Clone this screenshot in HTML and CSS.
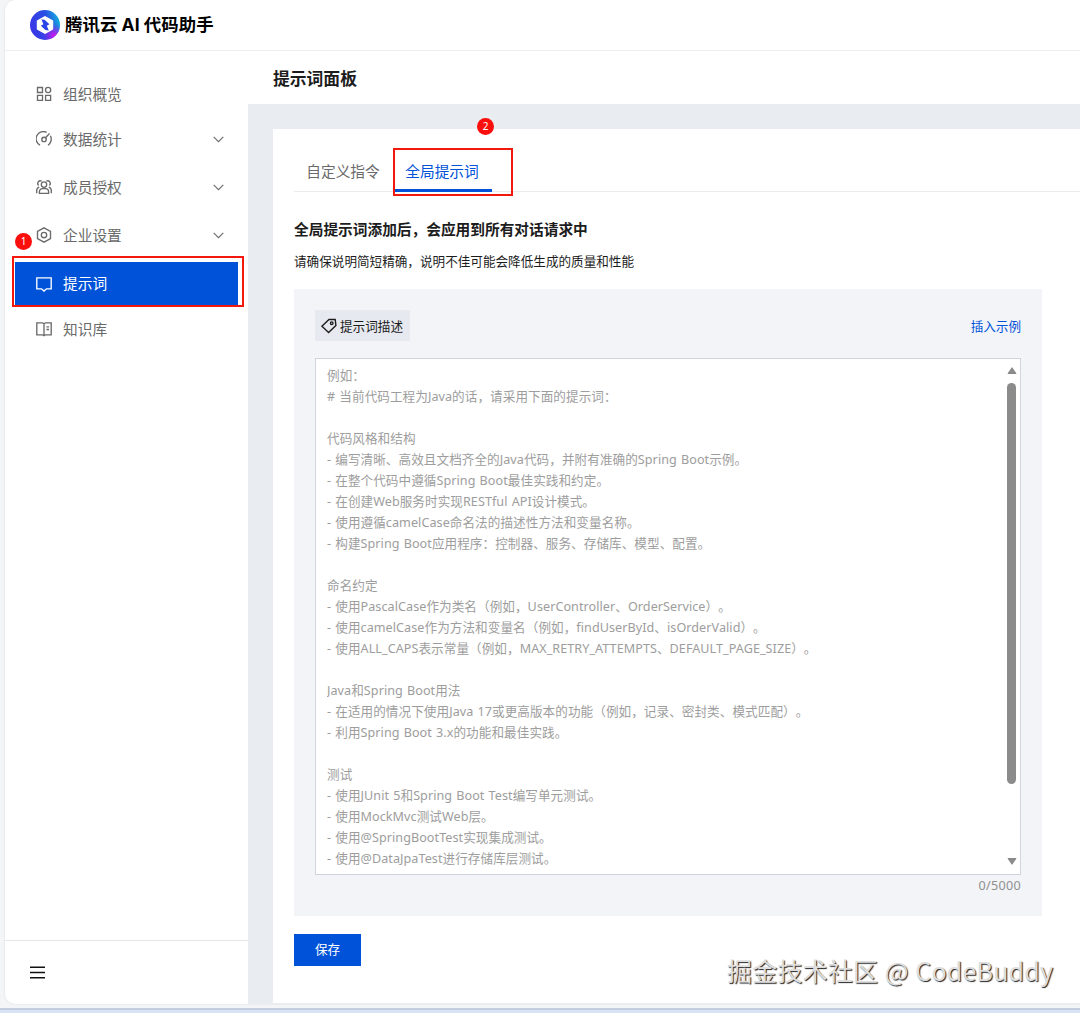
FILE: index.html
```html
<!DOCTYPE html>
<html lang="zh-CN">
<head>
  <meta charset="UTF-8">
  <meta name="viewport" content="width=device-width, initial-scale=1.0">
  <title>腾讯云 AI 代码助手</title>
  <link rel="stylesheet" href="styles.css">
</head>

<body>
<div class="app">
  <header class="header">
    <svg class="logo" viewBox="0 0 30 30">
      <defs>
        <linearGradient id="lg" x1="0" y1="0.6" x2="1" y2="0.3">
          <stop offset="0" stop-color="#3a35e6"/>
          <stop offset="0.6" stop-color="#2a50e4"/>
          <stop offset="1" stop-color="#12b4dc"/>
        </linearGradient>
        <radialGradient id="pk" cx="0.8" cy="0.85" r="0.4">
          <stop offset="0" stop-color="#d414f0"/>
          <stop offset="1" stop-color="#8a20f0" stop-opacity="0"/>
        </radialGradient>
      </defs>
      <circle cx="15" cy="15" r="15" fill="url(#lg)"/>
      <circle cx="15" cy="15" r="15" fill="url(#pk)"/>
      <path d="M15 7l7.200 4v8L15 23l-7.200-4v-8z" fill="#fff" stroke="#fff" stroke-width="2" stroke-linejoin="round"/>
      <path d="M11.400 9.400l3.200.4 4.800 4.400-2.600 1.600 2 4.800-3.400-.6-4.600-4.200 2.600-1.600z" fill="#2a45e6"/>
    </svg>
    <h1>腾讯云 AI 代码助手</h1>
  </header>

  <div class="body">
    <aside class="sidebar">
      <nav>
        <a class="item">
          <svg class="icon" viewBox="0 0 16 16"><path d="M1.500 1.500h5v5h-5zM1.500 9.400h5v5h-5zM9.600 9.400h5v5h-5z"/><circle cx="12.100" cy="4" r="2.600"/></svg>
          <span>组织概览</span>
        </a>
        <a class="item group">
          <svg class="icon" viewBox="0 0 16 16"><path d="M4 14.200A7.200 7.200 0 0 1 10.600 1.400M12 14.200a7.200 7.200 0 0 0 2.400-9.400M9.500 6.700l4-4.200"/><circle cx="8" cy="8.400" r="2.200"/></svg>
          <span>数据统计</span>
          <svg class="arrow" viewBox="0 0 10 6"><path d="M.6.6L5 5 9.400.6"/></svg>
        </a>
        <a class="item group">
          <svg class="icon" viewBox="0 0 16 16"><circle cx="8" cy="5.600" r="2.700"/><path d="M3.400 14.300v-1.500a3.200 3.200 0 0 1 3.200-3.200h2.800a3.200 3.200 0 0 1 3.200 3.200v1.500zM5.600 2.200a2.600 2.600 0 0 0-3 4.200M10.400 2.200a2.600 2.600 0 0 1 3 4.200M3.200 8.200A3.600 3.600 0 0 0 .7 11.600v2.700M12.800 8.200a3.600 3.600 0 0 1 2.500 3.400v2.700"/></svg>
          <span>成员授权</span>
          <svg class="arrow" viewBox="0 0 10 6"><path d="M.6.6L5 5 9.400.6"/></svg>
        </a>
        <a class="item group">
          <svg class="icon" viewBox="0 0 16 16"><path d="M8 .8l6.500 3.600v7.200L8 15.200l-6.500-3.600V4.400z"/><circle cx="8" cy="8" r="2.700"/></svg>
          <span>企业设置</span>
          <svg class="arrow" viewBox="0 0 10 6"><path d="M.6.6L5 5 9.400.6"/></svg>
        </a>
        <a class="item active">
          <svg class="icon" viewBox="0 0 16 16"><path d="M.8 1.800h14.400v11h-4.700L8 15l-2.500-2.200H.8z"/></svg>
          <span>提示词</span>
        </a>
        <a class="item">
          <svg class="icon" viewBox="0 0 16 16"><path d="M8 2.800L6.500 1.800H.8v12h5.700l1.500 1 1.500-1h5.700v-12H9.500zM8 2.800v12M10.400 5.800h2.600M10.400 8.500h2.600"/></svg>
          <span>知识库</span>
        </a>
      </nav>
      <div class="collapse">
        <svg class="burger" viewBox="0 0 14 12"><path d="M0 1h14M0 6h14M0 11h14"/></svg>
      </div>
    </aside>

    <main class="main">
      <h2 class="page-title">提示词面板</h2>
      <div class="page">
        <section class="card">
          <div class="tabs">
            <a class="tab">自定义指令</a>
            <a class="tab current">全局提示词</a>
          </div>
          <h3>全局提示词添加后，会应用到所有对话请求中</h3>
          <p class="tip">请确保说明简短精确，说明不佳可能会降低生成的质量和性能</p>

          <div class="panel">
            <div class="panel-head">
              <span class="tag">
                <svg class="tag-icon" viewBox="0 0 16 16"><path d="M.9 8.200L8 1.500l6.200-.1.700 6-7.300 7.200z"/><circle cx="10.700" cy="5.200" r="1.300"/></svg>
                提示词描述
              </span>
              <a class="link">插入示例</a>
            </div>
            <div class="editor">
              <div class="placeholder">例如：
# 当前代码工程为Java的话，请采用下面的提示词：

代码风格和结构
- 编写清晰、高效且文档齐全的Java代码，并附有准确的Spring Boot示例。
- 在整个代码中遵循Spring Boot最佳实践和约定。
- 在创建Web服务时实现RESTful API设计模式。
- 使用遵循camelCase命名法的描述性方法和变量名称。
- 构建Spring Boot应用程序：控制器、服务、存储库、模型、配置。

命名约定
- 使用PascalCase作为类名（例如，UserController、OrderService）。
- 使用camelCase作为方法和变量名（例如，findUserById、isOrderValid）。
- 使用ALL_CAPS表示常量（例如，MAX_RETRY_ATTEMPTS、DEFAULT_PAGE_SIZE）。

Java和Spring Boot用法
- 在适用的情况下使用Java 17或更高版本的功能（例如，记录、密封类、模式匹配）。
- 利用Spring Boot 3.x的功能和最佳实践。

测试
- 使用JUnit 5和Spring Boot Test编写单元测试。
- 使用MockMvc测试Web层。
- 使用@SpringBootTest实现集成测试。
- 使用@DataJpaTest进行存储库层测试。</div>
              <div class="scrollbar">
                <svg class="sb-arrow" viewBox="0 0 10 8"><path d="M5 1.200L9 7H1z"/></svg>
                <div class="thumb"></div>
                <svg class="sb-arrow" viewBox="0 0 10 8"><path d="M5 6.800L1 1h8z"/></svg>
              </div>
            </div>
            <div class="count">0/5000</div>
          </div>

          <button class="save">保存</button>
        </section>
      </div>
    </main>
  </div>
</div>
<div class="taskbar"></div>

<!-- step marks -->
<div class="mark mark-menu"></div>
<div class="mark mark-tab"></div>
<div class="badge badge-menu">1</div>
<div class="badge badge-tab">2</div>
<div class="watermark">掘金技术社区 @ CodeBuddy</div>
</body>
</html>
```
FILE: styles.css
```css
*{box-sizing:border-box}
html,body{margin:0;padding:0;width:100%;height:100%;}
body{position:relative;overflow:hidden;display:flex;flex-direction:column;
     background:#f4f5f6;color:#1c1c1c;font-size:12.6px;
     font-family:"Noto Sans","Noto Sans CJK SC",sans-serif;
     text-spacing-trim:space-all;}
h1,h2,h3,p{margin:0}
svg{display:block;flex:none;fill:none;stroke:currentColor}

.app{height:1004px;flex:none;margin-left:5px;background:#fff;display:flex;flex-direction:column;
     border-radius:10px 0 0 10px;overflow:hidden;box-shadow:0 0 2px #d5d9de}
.header{height:51px;flex:none;border-bottom:1px solid #eceef0;
        display:flex;align-items:center;padding-left:25px;gap:5px}
.logo{width:30px;height:30px;stroke:none}
.header h1{font:bold 17.4px/26px Inter,"Noto Sans CJK SC",sans-serif;color:#000;letter-spacing:.08px}
.body{flex:1;display:flex;min-height:0}

/* sidebar */
.sidebar{width:243px;flex:none;display:flex;flex-direction:column}
nav{flex:1;padding:22px 10px 0}
.item{display:flex;align-items:center;height:42px;margin-bottom:3px;
      padding:0 14px 0 21px;font-size:14.7px;color:#6a6a6a}
.item.group{margin-bottom:6px}
.item span{margin:-2px 0 0 11px;flex:1}
.item.active{height:43px;margin-bottom:3px;background:#0052d9;color:#fff}
.icon{width:16px;height:16px;stroke-width:1.35}
.arrow{width:11px;height:7px}
.collapse{height:64px;border-top:1px solid #e3e7ea;padding:25px 0 0 25px}
.burger{width:15px;height:13px;color:#111;stroke-width:1.4}

/* content */
.main{flex:1;display:flex;flex-direction:column;min-width:0}
.page-title{height:53px;flex:none;padding-left:25px;font-size:16.8px;line-height:56px}
.page{flex:1;background:#e9edf1;padding:25px 0 1px 25px;display:flex}
.card{flex:1;background:#fff;padding:20px 0 0 21px}
.tabs{display:flex;height:43px;border-bottom:1px solid #e9ebee}
.tab{width:99px;height:43px;padding-right:1px;text-align:center;line-height:45px;font-size:14.7px;color:#6a6a6a}
.tab.current{color:#0052d9;border-bottom:3px solid #0052d9}
.card h3{margin-top:25px;font-size:14.7px;line-height:24px}
.tip{margin-top:11px;line-height:20px}

.panel{width:748px;height:627px;margin-top:17px;padding:21px;background:#f2f4f8}
.panel-head{display:flex;justify-content:space-between;align-items:center;height:31px}
.tag{display:flex;align-items:center;gap:3px;width:95px;height:31px;padding-left:6px;background:#e6e9ef}
.tag-icon{width:16px;height:16px;stroke-width:1.4}
.link{color:#0052d9}
.editor{display:flex;height:517px;margin-top:17px;padding:6px 3px 5px 11px;
        background:#fff;border:1px solid #cfd5de}
.placeholder{flex:1;white-space:pre;line-height:21px;color:#9d9d9d;overflow:hidden;
             word-spacing:.8px;letter-spacing:.06px}
.scrollbar{width:11px;display:flex;flex-direction:column;align-items:center;padding-top:1px}
.sb-arrow{width:10px;height:9px;fill:#8b8b8b;stroke:#8b8b8b;stroke-width:1;stroke-linejoin:round}
.thumb{width:9px;height:401px;margin:8px 0 73px;border-radius:5px;background:#8b8b8b}
.count{margin-top:2px;text-align:right;line-height:18px;color:#8f8f8f;letter-spacing:.3px}
.save{display:block;width:67px;height:32px;margin-top:18px;padding:0 0 3px;border:0;
      background:#0052d9;color:#fff;font:inherit}

.taskbar{flex:1;margin-top:4px;background:#d8e3f5;border-top:2px solid #c3cddd}

/* step marks over the page */
.mark{position:absolute;border:2px solid #f3180c}
.mark-menu{left:12px;top:256px;width:232px;height:51px}
.mark-tab{left:393px;top:148px;width:120px;height:48px}
.badge{position:absolute;width:17px;height:17px;border-radius:50%;background:#fb0f0c;
       color:#fff;font-size:10px;line-height:17px;text-align:center}
.badge-menu{left:15px;top:233px}
.badge-tab{left:477px;top:118px}
.watermark{position:absolute;left:727px;top:952px;white-space:pre;
           font:25px/36px "Noto Sans CJK SC",sans-serif;color:#dedede;
           letter-spacing:.2px;word-spacing:.8px;text-shadow:1px 1px 1px #222}
```
